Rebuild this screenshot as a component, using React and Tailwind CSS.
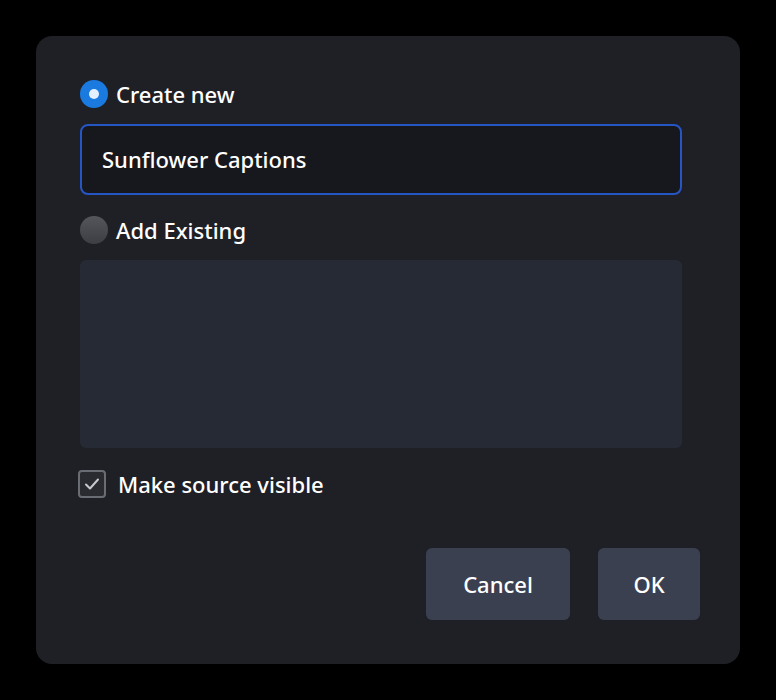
export default function App() {
  return (
    <div className="min-h-[700px] w-full bg-black p-[36px]" style={{ fontFamily: '"Noto Sans", sans-serif' }}>
      <div className="h-[628px] w-[704px] rounded-2xl bg-[#1f2026] px-[44px] pt-[44px] font-medium text-white">
        <div className="flex h-[28px] items-center gap-[8px]">
          <span className="flex h-[28px] w-[28px] items-center justify-center rounded-full bg-[#1a7ae0]">
            <span className="h-[10px] w-[10px] rounded-full bg-[#e4efff]" />
          </span>
          <span className="text-[22px]">Create new</span>
        </div>
        <div className="mt-[16px] flex h-[71px] w-[602px] items-center rounded-lg border-2 border-[#2655c4] bg-[#17181d] px-[20px] text-[22px]">
          Sunflower Captions
        </div>
        <div className="mt-[21px] flex h-[28px] items-center gap-[8px]">
          <span className="h-[28px] w-[28px] rounded-full bg-gradient-to-b from-[#55565c] to-[#3d3e44]" />
          <span className="text-[22px]">Add Existing</span>
        </div>
        <div className="mt-[16px] h-[188px] w-[602px] rounded-md bg-[#262a34]" />
        <div className="mt-[22px] ml-[-2px] flex h-[28px] items-center gap-[12px]">
          <span className="flex h-[28px] w-[28px] items-center justify-center rounded border-2 border-[#6b6d74] bg-[#2a2b31]">
            <svg width="18" height="18" viewBox="0 0 18 18" fill="none" stroke="#c8c9cd" strokeWidth="2" strokeLinecap="round" strokeLinejoin="round">
              <path d="M3 9.5l4 4 8-9" />
            </svg>
          </span>
          <span className="text-[22px]">Make source visible</span>
        </div>
        <div className="mt-[50px] mr-[-4px] flex justify-end gap-[28px]">
          <button className="h-[72px] w-[144px] rounded-md bg-[#3b4050] text-[22px]">Cancel</button>
          <button className="h-[72px] w-[102px] rounded-md bg-[#3b4050] text-[22px]">OK</button>
        </div>
      </div>
    </div>
  );
}
